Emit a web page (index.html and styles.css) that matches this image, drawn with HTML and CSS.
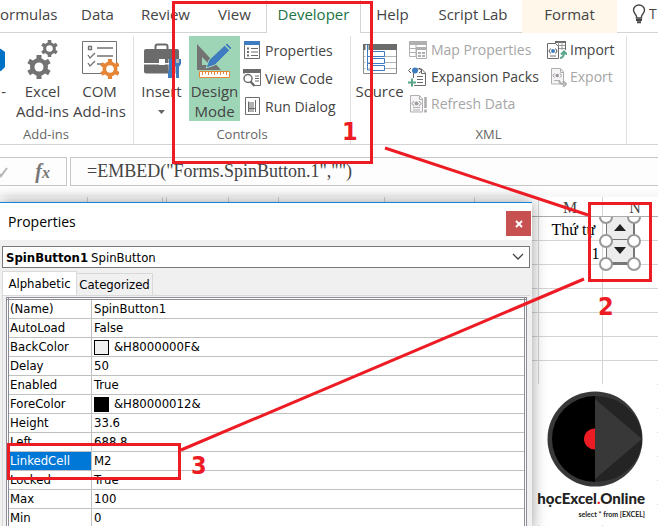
FILE: index.html
```html
<!DOCTYPE html>
<html lang="en">
<head>
  <meta charset="UTF-8">
  <title>Spin Button Properties</title>
  <link rel="stylesheet" href="styles.css">
</head>
<body>
<div class="app">

  <!-- Shared icon shapes -->
  <svg class="defs" width="0" height="0" aria-hidden="true">
    <symbol id="gear" viewBox="-12 -12 24 24">
      <circle r="6.5" fill="none" stroke="currentColor" stroke-width="5"/>
      <g fill="currentColor">
        <rect x="-2.5" y="-12" width="5" height="24"/>
        <rect x="-2.5" y="-12" width="5" height="6" transform="rotate(60)"/>
        <rect x="-2.5" y="-12" width="5" height="6" transform="rotate(120)"/>
        <rect x="-2.5" y="-12" width="5" height="6" transform="rotate(240)"/>
        <rect x="-2.5" y="-12" width="5" height="6" transform="rotate(300)"/>
      </g>
      <circle r="4.5" fill="#fff"/>
    </symbol>
  </svg>

  <!-- Ribbon tabs -->
  <nav class="tabs">
    <a href="#">ormulas</a>
    <a href="#">Data</a>
    <a href="#">Review</a>
    <a href="#">View</a>
    <a href="#" class="active">Developer</a>
    <a href="#">Help</a>
    <a href="#">Script Lab</a>
    <a href="#" class="context">Format</a>
    <a href="#" class="tell">
      <svg width="14" height="20" viewBox="0 0 14 20" fill="none" stroke="#444" stroke-width="1.4"><path d="M4.500 14V12.500C4.500 10.500 1.500 9.500 1.500 6a5.500 5 0 0 1 11 0C12.500 9.500 9.500 10.500 9.500 12.500V14z"/><path d="M4 16h6M5 18.300h4" stroke-width="2"/></svg>
      T
    </a>
  </nav>

  <!-- Ribbon -->
  <div class="ribbon">
    <section class="group addins">
      <div class="tools">
        <button class="large store">
          <svg width="38" height="40" viewBox="0 0 38 40"><path d="M4 14 19 6l14 3 4 3v15l-4 4-14 4-15-9z" fill="#0072c6"/></svg>
          <span>-</span>
        </button>
        <button class="large">
          <svg width="38" height="40" viewBox="0 0 38 40" color="#737373"><use href="#gear" x="3" y="15" width="24" height="24"/><use href="#gear" x="17" y="0" width="17" height="17"/></svg>
          <span>Excel<br>Add-ins</span>
        </button>
        <button class="large">
          <svg width="38" height="40" viewBox="0 0 38 40"><path d="M1.500 1.500h34v32h-34z" fill="#fff" stroke="#737373"/><path d="M7.500 6.500h3v3h-3zM16 8h16M16 16h16M16 24h5M7 15l2 3 5-5M7 23l2 3 5-5" fill="none" stroke="#737373" stroke-width="1.300"/><g color="#e68536"><use href="#gear" x="19" y="19" width="20" height="20"/></g></svg>
          <span>COM<br>Add-ins</span>
        </button>
      </div>
      <h2>Add-ins</h2>
    </section>

    <section class="group controls">
      <div class="tools">
        <button class="large">
          <svg width="38" height="40" viewBox="0 0 38 40"><path d="M12.500 10V6.500q0-2 2-2h8q2 0 2 2V10" fill="none" stroke="#6b6b6b" stroke-width="2"/><path d="M1 11q0-2 2-2h31q2 0 2 2v12H1z" fill="#6b6b6b"/><path d="M1 24.500h35v9H3q-2 0-2-2z" fill="#6b6b6b"/><path d="M16 19h6v6h-6z" fill="#fff"/><path d="M25 19h13v20H26z" fill="#fff" fill-opacity=".5"/><path d="M26 19h4v7h-1v4l1 2v6h-5v-6l1-2zM31 19v5l2 3v11h3V27l2-3v-5h-2v4h-3v-4z" fill="#3f7cbf"/></svg>
          <span>Insert</span>
          <svg class="arrow" width="7" height="4" viewBox="0 0 7 4"><path d="M0 0h7L3.500 4z" fill="#666"/></svg>
        </button>
        <button class="large pressed">
          <svg width="38" height="40" viewBox="2 0 38 40"><path d="M3 4v26h24zM8 17l8 8H8z" fill="#737373" fill-rule="evenodd"/><path d="M12 28l3-8L33 3l5 5-17 17z" fill="#3f7cbf" stroke="#9fd5b7"/><path d="M31 5l5 5" stroke="#9fd5b7" stroke-width="1.500"/><path d="M5.500 31.500h30v6h-30z" fill="#fff" stroke="#e68536"/><path d="M8.500 32v3m3-3v2m3-2v3m3-3v2m3-2v3m3-3v2m3-2v3m3-3v2m3-2v3" stroke="#e68536"/></svg>
          <span>Design<br>Mode</span>
        </button>
        <div class="stack">
          <button class="small">
            <svg width="20" height="20" viewBox="0 0 20 20"><path d="M2.500 2.500h15v16h-15z" fill="#fff" stroke="#6b6b6b"/><path d="M2 1h16v4H2z" fill="#3f7cbf"/><path d="M9 8.500h7M9 12h7M9 15.500h7" stroke="#6b6b6b"/><path d="M5 7.500h2v2H5zM5 11h2v2H5zM5 14.500h2v2H5z" fill="#6b6b6b"/></svg>
            Properties
          </button>
          <button class="small">
            <svg width="20" height="20" viewBox="0 0 20 20"><path d="M2 6V2.500h16.500v15H11" fill="#fff" stroke="#6b6b6b"/><path d="M1 1h18v4H1z" fill="#6b6b6b"/><path d="M13 8h4M13 10.500h4M13 13h4" stroke="#6b6b6b"/><circle cx="6" cy="10.500" r="4" fill="#fff" stroke="#6b6b6b" stroke-width="1.500"/><path d="M8.500 13.500l4 4.500" stroke="#6b6b6b" stroke-width="2.500"/></svg>
            View Code
          </button>
          <button class="small">
            <svg width="20" height="20" viewBox="0 0 20 20"><path d="M3.500 1.500h14v17h-14z" fill="#fff" stroke="#6b6b6b"/><path d="M7 6h5v6H7zM7 13h5v3H7z" fill="#b0b0b0"/><path d="M6.500 16V5.500M13.500 4v12M7 12.500h6" stroke="#6b6b6b"/></svg>
            Run Dialog
          </button>
        </div>
      </div>
      <h2>Controls</h2>
    </section>

    <section class="group xml">
      <div class="tools">
        <button class="large">
          <svg width="38" height="40" viewBox="0 0 38 40"><path d="M2.500 5.500h33v28h-33z" fill="#fff" stroke="#8a8a8a"/><path d="M2 4h34v6H2z" fill="#6b6b6b"/><path d="M3 16.500h32M3 22.500h32M3 28.500h32" stroke="#b5b5b5"/><path d="M6 5v27" stroke="#fff" stroke-width="3"/><path d="M6.500 4v26h3M7 16.500h3M7 23.500h3" fill="none" stroke="#3f7cbf"/><path d="M10.500 11.500h13v5h-13zM10.500 18.500h13v5h-13zM10.500 25.500h13v5h-13z" fill="#fff" stroke="#3f7cbf"/></svg>
          <span>Source</span>
        </button>
        <div class="stack packs">
          <button class="small" disabled>
            <svg width="20" height="20" viewBox="0 0 20 20"><path d="M1.500 2.500h17v14h-17zM2 8.500h7M2 12.500h6M8 5v11" fill="#fff" stroke="#b0b0b0"/><path d="M1 1h18v4H1z" fill="#b0b0b0"/><path d="M8.500 8.500h10v10h-10z" fill="#fff" stroke="#b0b0b0"/><path d="M8 7h11v3H8zM10 12h3v2h-3zM14 12h3v2h-3zM10 15h3v2h-3zM14 15h3v2h-3z" fill="#b0b0b0"/></svg>
            Map Properties
          </button>
          <button class="small">
            <svg width="20" height="20" viewBox="0 0 20 20"><path d="M5.500 6v12.500h12V6l-4-4H8" fill="#fff" stroke="#6b6b6b"/><path d="M13.500 2v4.500h4M9 9.500h6M9 12.500h6M9 15.500h6" fill="none" stroke="#6b6b6b"/><path d="M3 1 .5 3.500 3 6M11 1l3 2.500L11 6" fill="none" stroke="#555"/><circle cx="7" cy="3.500" r="3" fill="#3f7cbf"/><path d="M0 15h8M4 11v8" stroke="#fff" stroke-width="4"/><path d="M0 15.500h8M4 11.500v8" stroke="#5aa68a" stroke-width="2"/></svg>
            Expansion Packs
          </button>
          <button class="small" disabled>
            <svg width="20" height="20" viewBox="0 0 20 20"><path d="M2.500 1.500h9l3 3.500v13h-12z" fill="#f7f4f7" stroke="#b0b0b0"/><path d="M11.500 2v3.500h3M5 13.500h7M5 16h7" fill="none" stroke="#b0b0b0"/><path d="M6 7 4 9.500 6 12M11 7l2 2.500-2 2.500" fill="none" stroke="#999"/><circle cx="8.500" cy="9.500" r="2" fill="#a0a0a0"/><path d="M17.500 3v11M17.500 15.500v3" stroke="#aaa" stroke-width="2.500"/></svg>
            Refresh Data
          </button>
        </div>
        <div class="stack">
          <button class="small">
            <svg width="20" height="20" viewBox="0 0 20 20"><path d="M8.500 1.500h10v10h-10z" fill="#fff" stroke="#6b6b6b"/><path d="M8 1h11v2H8z" fill="#6b6b6b"/><path d="M11.500 2v9M15 2v9M9 5.500h9M9 8.500h9" stroke="#999"/><path d="M.5 3.500h8l3 3v12H.5z" fill="#fff" stroke="#6b6b6b"/><path d="M3 16h6" stroke="#6b6b6b"/><path d="M3.500 8.500 2 11l1.500 2.500M8.500 8.500 10 11l-1.500 2.500" fill="none" stroke="#555"/><circle cx="6" cy="11" r="2" fill="#3f7cbf"/><path d="M12 10h8v10h-8z" fill="#fff"/><path d="M13 18q4 0 4-6M14 14.500l3-3 3 3" fill="none" stroke="#5aa68a" stroke-width="2"/></svg>
            Import
          </button>
          <button class="small" disabled>
            <svg width="20" height="20" viewBox="0 0 20 20"><path d="M4.500 1.500h9l3 3.500v12h-12z" fill="#f7f4f7" stroke="#b0b0b0"/><path d="M13.500 2v3.500h3M7 13.500h6" fill="none" stroke="#b0b0b0"/><path d="M7.500 6.500 6 8.500l1.500 2M13 6.500l1.500 2-1.500 2" fill="none" stroke="#999"/><circle cx="10.200" cy="8.500" r="1.800" fill="#999"/><path d="M12 13q0 4 5 4M16 14l3 3-3 3" fill="none" stroke="#b0b0b0" stroke-width="2"/></svg>
            Export
          </button>
        </div>
      </div>
      <h2>XML</h2>
    </section>
  </div>

  <!-- Formula bar -->
  <div class="formula-bar">
    <div class="fx">
      <svg width="8" height="12" viewBox="0 0 8 12"><path d="M0 8l1 2 6-8" fill="none" stroke="#b5b5b5" stroke-width="2"/></svg>
      <i>f<small>x</small></i>
    </div>
    <input type="text" aria-label="Formula bar" value='=EMBED("Forms.SpinButton.1","")'>
  </div>

  <!-- Worksheet -->
  <table class="sheet">
    <colgroup>
      <col class="w87"><col class="w75"><col class="w4"><col class="w62"><col class="w50"><col class="w106"><col class="w90"><col class="w64"><col class="w64"><col class="w66">
    </colgroup>
    <thead>
      <tr><th></th><th></th><th></th><th></th><th></th><th></th><th></th><th></th><th>M</th><th>N</th></tr>
    </thead>
    <tbody>
      <tr>
        <td></td><td></td><td></td><td></td><td></td><td></td><td></td><td></td><td class="title">Thứ tự</td>
        <td class="anchor">
          <div class="spin">
            <button aria-label="Spin up"><svg width="12" height="7" viewBox="0 0 12 7"><path d="M6 0l6 7H0z" fill="#222"/></svg></button>
            <button aria-label="Spin down"><svg width="12" height="7" viewBox="0 0 12 7"><path d="M0 0h12L6 7z" fill="#222"/></svg></button>
            <svg class="handles" width="46" height="56" viewBox="0 0 46 56" fill="#fff" stroke="#999" stroke-width="2">
              <circle cx="9" cy="0" r="6"/><circle cx="37" cy="0" r="6"/>
              <circle cx="9" cy="24" r="6"/><circle cx="37" cy="24" r="6"/>
              <circle cx="9" cy="47" r="6"/><circle cx="37" cy="47" r="6"/>
            </svg>
          </div>
        </td>
      </tr>
      <tr><td></td><td></td><td></td><td></td><td></td><td></td><td></td><td></td><td class="num">1</td><td></td></tr>
      <tr><td></td><td></td><td></td><td></td><td></td><td></td><td></td><td></td><td></td><td></td></tr>
      <tr><td></td><td></td><td></td><td></td><td></td><td></td><td></td><td></td><td></td><td></td></tr>
      <tr><td></td><td></td><td></td><td></td><td></td><td></td><td></td><td></td><td></td><td></td></tr>
      <tr><td></td><td></td><td></td><td></td><td></td><td></td><td></td><td></td><td></td><td></td></tr>
      <tr><td></td><td></td><td></td><td></td><td></td><td></td><td></td><td></td><td></td><td></td></tr>
      <tr><td></td><td></td><td></td><td></td><td></td><td></td><td></td><td></td><td></td><td></td></tr>
      <tr><td></td><td></td><td></td><td></td><td></td><td></td><td></td><td></td><td></td><td></td></tr>
      <tr><td></td><td></td><td></td><td></td><td></td><td></td><td></td><td></td><td></td><td></td></tr>
      <tr><td></td><td></td><td></td><td></td><td></td><td></td><td></td><td></td><td></td><td></td></tr>
      <tr><td></td><td></td><td></td><td></td><td></td><td></td><td></td><td></td><td></td><td></td></tr>
      <tr><td></td><td></td><td></td><td></td><td></td><td></td><td></td><td></td><td></td><td></td></tr>
    </tbody>
  </table>

  <!-- Logo -->
  <div class="logo">
    <svg width="96" height="96" viewBox="0 0 96 96">
      <circle cx="48" cy="48" r="47.500" fill="#383838"/>
      <path d="M48 5a43 43 0 0 0 0 86z" fill="#000"/>
      <path d="M48 5a47 43 0 0 1 0 86z" fill="#242424"/>
      <path d="M48 8l47 40-47 40z" fill="#383838"/>
      <path d="M48 37.500a11 10.500 0 0 0 0 21z" fill="#ed1c24"/>
    </svg>
    <strong>họcExcel<b>.</b>Online</strong>
    <span>select * from [EXCEL]</span>
  </div>

  <!-- Properties window -->
  <div class="window">
    <header>
      <h1>Properties</h1>
      <button aria-label="Close"><svg width="8" height="8" viewBox="0 0 8 8"><path d="M1 1l6 6M7 1L1 7" stroke="#fff" stroke-width="2"/></svg></button>
    </header>
    <div class="object">
      <label for="object">SpinButton1</label>
      <select id="object"><option>SpinButton</option></select>
      <svg width="12" height="8" viewBox="0 0 12 8"><path d="M1 1l5 5 5-5" fill="none" stroke="#444" stroke-width="1.300"/></svg>
    </div>
    <div class="sheets">
      <button class="current">Alphabetic</button>
      <button>Categorized</button>
    </div>
    <div class="panel">
      <table>
        <tr><th>(Name)</th><td>SpinButton1</td></tr>
        <tr><th>AutoLoad</th><td>False</td></tr>
        <tr><th>BackColor</th><td><i class="swatch"></i>&amp;H8000000F&amp;</td></tr>
        <tr><th>Delay</th><td>50</td></tr>
        <tr><th>Enabled</th><td>True</td></tr>
        <tr><th>ForeColor</th><td><i class="swatch black"></i>&amp;H80000012&amp;</td></tr>
        <tr><th>Height</th><td>33.6</td></tr>
        <tr><th>Left</th><td>688.8</td></tr>
        <tr class="selected"><th>LinkedCell</th><td>M2</td></tr>
        <tr><th>Locked</th><td>True</td></tr>
        <tr><th>Max</th><td>100</td></tr>
        <tr><th>Min</th><td>0</td></tr>
      </table>
    </div>
  </div>

  <!-- Numbered callouts -->
  <svg class="callouts" width="658" height="526" viewBox="0 0 658 526">
    <g fill="none" stroke="#ed1c24" stroke-width="3">
      <path d="M173.500 2.500h198v160h-198zM589.500 203.500h61v77h-61zM8.500 444.500h171v34h-171z"/>
      <path d="M385 148l203 67M584 279L181 450"/>
    </g>
    <g class="steps">
      <text x="342" y="140">1</text>
      <text x="598" y="315">2</text>
      <text x="191" y="474">3</text>
    </g>
  </svg>
</div>
</body>
</html>
```
FILE: styles.css
```css
* {
    box-sizing: border-box;
}
body {
    margin: 0;
    font-family: "Open Sans", "Noto Sans", sans-serif;
    font-size: 15px;
    color: #444;
}
h1, h2 {
    margin: 0;
    font-weight: normal;
}
button, input, select {
    font: inherit;
    color: inherit;
    background: none;
    border: 0;
    padding: 0;
    margin: 0;
}
svg {
    display: block;
    flex: none;
}
.defs {
    position: absolute;
}
.app {
    position: relative;
    height: 100vh;
    min-height: 526px;
    overflow: hidden;
    background: #fff;
}

/* ribbon tabs */
.tabs {
    display: grid;
    grid-template-columns: 67px 61px 75px 63px 95px 63px 98px 95px 1fr;
    height: 33px;
    border-bottom: 1px solid #d4d4d4;
}
.tabs a {
    color: #444;
    text-decoration: none;
    text-align: center;
    line-height: 28px;
    white-space: nowrap;
}
.tabs a:first-child {
    padding-right: 14px;
    text-align: right;
}
.tabs .active {
    height: 33px;
    color: #217346;
    background: #fff;
    border: solid #d4d4d4;
    border-width: 0 1px;
}
.tabs .context {
    background: #fef7ea;
}
.tabs .tell {
    display: flex;
    align-items: center;
    gap: 3px;
    padding-left: 15px;
    height: 28px;
    font-size: 14px;
}

/* ribbon */
.ribbon {
    display: flex;
    height: 112px;
    padding-top: 3px;
    border-bottom: 1px solid #d4d4d4;
    margin-left: -41px;
}
.group {
    display: flex;
    flex-direction: column;
    justify-content: space-between;
    border-right: 1px solid #e1e1e1;
}
.group h2 {
    font-size: 13px;
    line-height: 20px;
    text-align: center;
    color: #666;
}
.tools {
    display: flex;
    height: 85px;
}
.addins {
    width: 175px;
}
.controls {
    width: 217px;
}
.xml {
    width: 276px;
}
.large {
    display: flex;
    flex-direction: column;
    align-items: center;
    width: 57px;
    padding-top: 4px;
    line-height: 20px;
    white-space: nowrap;
}
.large span {
    padding-top: 1px;
}
.large .arrow {
    margin-top: 9px;
}
.addins .store {
    width: 55px;
    padding-right: 8px;
    align-items: flex-end;
}
.controls .large {
    width: 55px;
}
.controls .pressed {
    width: 51px;
    background: #9fd5b7;
}
.stack {
    display: flex;
    flex-direction: column;
    padding: 0 0 0 2px;
}
.xml .stack {
    padding: 0;
}
.xml .packs {
    width: 139px;
}
.small {
    display: flex;
    align-items: center;
    gap: 3px;
    height: 28px;
    font-size: 14px;
    white-space: nowrap;
}
.xml .small {
    height: 27px;
}
.small:disabled {
    color: #a6a6a6;
}

/* formula bar */
.formula-bar {
    display: flex;
    gap: 3px;
    padding-top: 12px;
    height: 52px;
    background: linear-gradient(#fff 40px, #f7f7f7);
}
.fx {
    display: flex;
    align-items: center;
    justify-content: space-between;
    width: 67px;
    height: 29px;
    padding-right: 16px;
    border: solid #c6c6c6;
    border-width: 1px 1px 1px 0;
    background: #fdfdfd;
}
.fx i {
    font: italic bold 20px "Liberation Serif", serif;
    color: #777;
}
.fx small {
    font-size: 16px;
}
.formula-bar input {
    flex: 1;
    height: 29px;
    padding-left: 16px;
    border: solid #c6c6c6;
    border-width: 1px 0 1px 1px;
    background: #fdfdfd;
    font: 18px "Liberation Serif", serif;
}

/* worksheet */
.sheet {
    table-layout: fixed;
    width: 100%;
    border-collapse: collapse;
    font: 16px/20px "Liberation Serif", serif;
    color: #000;
}
.sheet th, .sheet td {
    height: 24px;
    padding: 0;
    border-right: 1px solid #d4d4d4;
    border-bottom: 1px solid #d4d4d4;
    vertical-align: bottom;
}
.sheet th {
    height: 19px;
    line-height: 16px;
    font-weight: normal;
    color: #444;
    border-bottom-color: #ababab;
}
.sheet .title {
    padding-left: 13px;
    white-space: nowrap;
}
.sheet .num {
    padding-right: 2px;
    text-align: right;
}
.w87 { width: 87px; }
.w75 { width: 75px; }
.w4 { width: 4px; }
.w62 { width: 62px; }
.w50 { width: 50px; }
.w106 { width: 106px; }
.w90 { width: 90px; }
.w64 { width: 64px; }
.w66 { width: 66px; }
.sheet .anchor {
    position: relative;
}
.spin {
    position: absolute;
    top: 0;
    left: 3px;
    display: flex;
    flex-direction: column;
    width: 29px;
    height: 48px;
    border: solid #777;
    border-width: 0 2px 2px 1px;
}
.spin button {
    flex: 1;
    display: flex;
    align-items: center;
    justify-content: center;
    background: #ededed;
    border-bottom: 1px solid #777;
}
.handles {
    position: absolute;
    top: 0;
    left: -10px;
}

/* logo */
.logo {
    position: absolute;
    left: 532px;
    top: 384px;
    width: 125px;
    height: 141px;
    padding: 7px 12px 0 8px;
    background: #fff;
    color: #222;
    font-family: Lato, sans-serif;
    display: flex;
    flex-direction: column;
    align-items: flex-end;
    white-space: nowrap;
}
.logo svg {
    margin-right: 2px;
}
.logo strong {
    font-size: 15px;
    font-weight: 900;
    line-height: 22px;
}
.logo b {
    color: #ed1c24;
}
.logo span {
    font-size: 7px;
    font-weight: bold;
    line-height: 10px;
}

/* properties window */
.window {
    position: absolute;
    left: 0;
    top: 202px;
    width: 532px;
    background: #f0f0f0;
    border-top: 1px solid #1883d7;
    box-shadow: 0 0 14px rgba(0, 0, 0, 0.4);
    font: 13px "DejaVu Sans Condensed", "DejaVu Sans", sans-serif;
    color: #000;
}
.window header {
    display: flex;
    align-items: center;
    justify-content: space-between;
    height: 37px;
    padding: 0 1px 0 8px;
    background: #fff;
}
.window h1 {
    font: 14px "Open Sans", sans-serif;
}
.window header button {
    display: flex;
    align-items: center;
    justify-content: center;
    width: 25px;
    height: 25px;
    margin-top: 4px;
    background: #c75050;
}
.object {
    display: flex;
    align-items: center;
    gap: 3px;
    height: 22px;
    margin: 6px 2px 3px;
    padding: 0 5px 0 3px;
    border: 1px solid #777;
    background: #fff;
}
.object label {
    font-weight: bold;
}
.object select {
    flex: 1;
    appearance: none;
}
.sheets {
    display: flex;
    align-items: flex-end;
    height: 24px;
    padding-left: 2px;
}
.sheets button {
    height: 22px;
    width: 76px;
    border: 1px solid #d9d9d9;
    border-left: 0;
    border-bottom: 0;
}
.sheets .current {
    width: 75px;
    height: 24px;
    border-left: 1px solid #d9d9d9;
    background: #fff;
}
.panel {
    margin: 0 2px;
    padding: 1px 3px 0 3px;
    border: solid #d9d9d9;
    border-width: 1px 0 0 1px;
}
.panel table {
    width: 100%;
    border-collapse: collapse;
    border: 3px double #8c8c96;
    background: #fff;
}
.panel th, .panel td {
    height: 19px;
    padding: 0 0 0 2px;
    border-bottom: 1px solid #c0c0c0;
    font-weight: normal;
    line-height: 18px;
    text-align: left;
}
.panel th {
    width: 84px;
    padding-left: 1px;
    border-right: 1px solid #c0c0c0;
}
.panel .selected th {
    background: #0078d7;
    color: #fff;
}
.swatch {
    display: inline-block;
    width: 15px;
    height: 15px;
    margin-right: 5px;
    border: 1px solid #000;
    background: #f0f0f0;
    vertical-align: middle;
}
.black {
    background: #000;
}

/* callouts */
.callouts {
    position: absolute;
    left: 0;
    top: 0;
    pointer-events: none;
}
.steps {
    font: bold 25px "DejaVu Sans Condensed", "DejaVu Sans", sans-serif;
    fill: #ed1c24;
}
```
